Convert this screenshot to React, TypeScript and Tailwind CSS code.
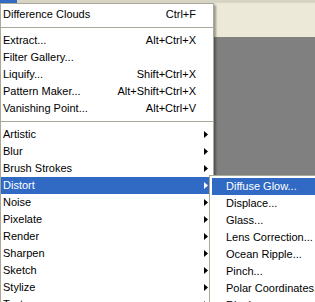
import React from "react";

type Item =
  | { sep: true }
  | { label: string; shortcut?: string; arrow?: boolean; active?: boolean };

const mainItems: Item[] = [
  { label: "Difference Clouds", shortcut: "Ctrl+F" },
  { sep: true },
  { label: "Extract...", shortcut: "Alt+Ctrl+X" },
  { label: "Filter Gallery..." },
  { label: "Liquify...", shortcut: "Shift+Ctrl+X" },
  { label: "Pattern Maker...", shortcut: "Alt+Shift+Ctrl+X" },
  { label: "Vanishing Point...", shortcut: "Alt+Ctrl+V" },
  { sep: true },
  { label: "Artistic", arrow: true },
  { label: "Blur", arrow: true },
  { label: "Brush Strokes", arrow: true },
  { label: "Distort", arrow: true, active: true },
  { label: "Noise", arrow: true },
  { label: "Pixelate", arrow: true },
  { label: "Render", arrow: true },
  { label: "Sharpen", arrow: true },
  { label: "Sketch", arrow: true },
  { label: "Stylize", arrow: true },
  { label: "Texture", arrow: true },
  { label: "Video", arrow: true },
];

const subItems = [
  "Diffuse Glow...",
  "Displace...",
  "Glass...",
  "Lens Correction...",
  "Ocean Ripple...",
  "Pinch...",
  "Polar Coordinates...",
  "Ripple...",
  "Shear...",
];

function Arrow({ white }: { white?: boolean }) {
  return (
    <svg width="4" height="7" viewBox="0 0 4 7" className="block">
      <path d="M0 0 L4 3.5 L0 7 Z" fill={white ? "#ffffff" : "#000000"} />
    </svg>
  );
}

export default function App() {
  return (
    <div
      className="relative w-[315px] h-[302px] overflow-hidden flex flex-col"
      style={{ fontFamily: '"Liberation Sans", Arial, sans-serif' }}
    >
      <div className="h-[3px] flex">
        <div className="w-[17px] bg-[#316ac5]" />
        <div className="flex-1 bg-[#d8d4c4]" />
      </div>
      <div className="h-[34px] bg-[#ece9d8]" />
      <div className="flex-1 bg-[#808080]" />

      {/* main menu */}
      <div className="absolute left-0 top-[3px] w-[214px] bg-white border border-[#aca899] py-[2px] shadow-[2px_2px_2px_rgba(0,0,0,0.35)] text-[11px] leading-[17px] text-black">
        {mainItems.map((it, i) =>
          "sep" in it ? (
            <div key={i} className="h-[9px] flex items-center">
              <div className="h-px w-full bg-[#aca899]" />
            </div>
          ) : (
            <div
              key={i}
              className={
                "h-[17px] flex items-center pl-[2px] " +
                (it.active ? "bg-[#316ac5] text-white mr-[4px]" : "")
              }
            >
              <span className="flex-1 whitespace-nowrap">{it.label}</span>
              {it.shortcut && (
                <span className="whitespace-nowrap">{it.shortcut}</span>
              )}
              <span
                className={
                  "flex items-center pl-[8px] " +
                  (it.active ? "w-[13px]" : "w-[17px]")
                }
              >
                {it.arrow && <Arrow white={it.active} />}
              </span>
            </div>
          )
        )}
      </div>

      {/* submenu */}
      <div className="absolute left-[209px] top-[175px] w-[130px] bg-white border border-[#aca899] py-[2px] pl-[2px] text-[11px] leading-[17px] text-black">
        {subItems.map((s, i) => (
          <div
            key={i}
            className={
              "h-[17px] flex items-center pl-[14px] whitespace-nowrap " +
              (i === 0 ? "bg-[#316ac5] text-white" : "")
            }
          >
            {s}
          </div>
        ))}
      </div>
    </div>
  );
}
